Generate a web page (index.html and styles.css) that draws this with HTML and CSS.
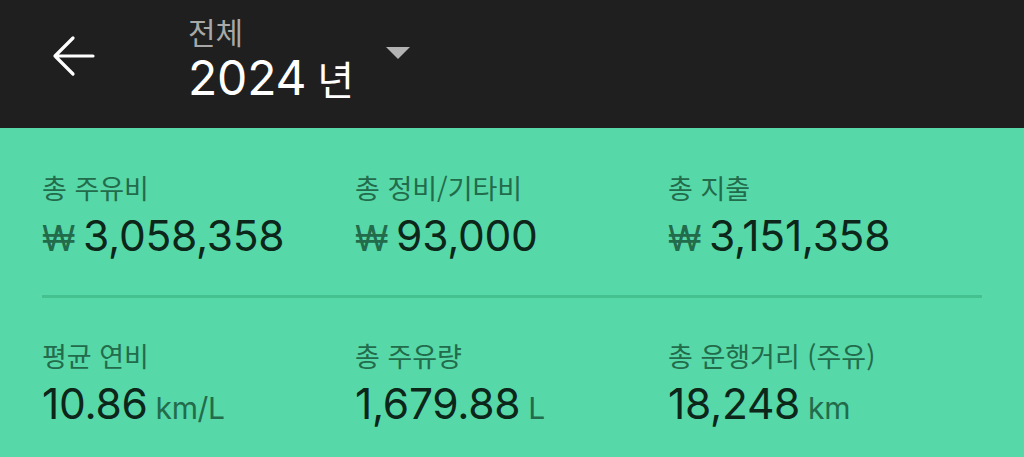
FILE: index.html
```html
<!DOCTYPE html>
<html lang="ko">
<head>
<meta charset="utf-8">
<link rel="stylesheet" href="styles.css">
</head>
<body>
<header class="topbar">
  <button class="back" aria-label="뒤로">
    <svg width="44" height="44" viewBox="0 0 44 44"><path d="M42 22 H4 M22 4 L4 22 L22 40" fill="none" stroke="#fff" stroke-width="3.2" stroke-linecap="round" stroke-linejoin="round"/></svg>
  </button>
  <div class="title">
    <div class="sub">전체</div>
    <div class="year">2024<span class="yr">년</span></div>
  </div>
  <div class="caret"></div>
</header>
<main class="panel">
  <div class="grid">
    <div class="stat"><div class="label">총 주유비</div><div class="value"><span class="cur">₩</span>3,058,358</div></div>
    <div class="stat"><div class="label">총 정비/기타비</div><div class="value"><span class="cur">₩</span>93,000</div></div>
    <div class="stat"><div class="label">총 지출</div><div class="value"><span class="cur">₩</span>3,151,358</div></div>
  </div>
  <div class="divider"></div>
  <div class="grid grid2">
    <div class="stat"><div class="label">평균 연비</div><div class="value">10.86<span class="unit">km/L</span></div></div>
    <div class="stat"><div class="label">총 주유량</div><div class="value">1,679.88<span class="unit">L</span></div></div>
    <div class="stat"><div class="label">총 운행거리 (주유)</div><div class="value">18,248<span class="unit">km</span></div></div>
  </div>
</main>
</body>
</html>
```
FILE: styles.css
```css
* { box-sizing: border-box; }
html, body { margin: 0; padding: 0; }
body {
  background: #57d8a8;
  font-family: Inter, "Noto Sans CJK KR", sans-serif;
  width: 1024px;
  height: 457px;
  overflow: hidden;
}
.topbar {
  height: 128px;
  background: #1f1f1f;
  display: flex;
  align-items: flex-start;
}
.back {
  background: none;
  border: 0;
  padding: 0;
  margin: 34px 0 0 51px;
  width: 44px;
  height: 44px;
  display: block;
}
.back svg { display: block; }
.title {
  margin-left: 93px;
  margin-top: 11px;
  display: flex;
  flex-direction: column;
}
.sub {
  font-family: "Noto Sans CJK KR", sans-serif;
  color: #a8a8a8;
  font-size: 30px;
  line-height: 40px;
}
.year {
  color: #ffffff;
  font-size: 48px;
  line-height: 54px;
  letter-spacing: -0.2px;
}
.yr {
  font-family: "Noto Sans CJK KR", sans-serif;
  font-size: 40px;
  margin-left: 11px;
}
.caret {
  margin: 47px 0 0 32px;
  width: 0;
  height: 0;
  border-left: 12px solid transparent;
  border-right: 12px solid transparent;
  border-top: 12px solid #b3b3b3;
}
.panel {
  padding: 0 42px;
}
.grid {
  display: grid;
  grid-template-columns: 313px 313px 1fr;
  padding-top: 42px;
  padding-bottom: 32px;
}
.grid2 { padding-top: 40px; padding-bottom: 0; }
.label {
  font-family: "Noto Sans CJK KR", sans-serif;
  color: #226b4b;
  font-size: 27px;
  line-height: 36px;
}
.value {
  color: #0c2619;
  font-size: 42.5px;
  line-height: 50px;
  margin-top: 5px;
  letter-spacing: -0.3px;
}
.cur {
  color: #226b4b;
  font-size: 35px;
  margin-right: 8px;
}
.unit {
  color: #226b4b;
  font-size: 30px;
  margin-left: 8px;
}
.divider {
  height: 3px;
  background: #45c08f;
  width: 940px;
}
```
